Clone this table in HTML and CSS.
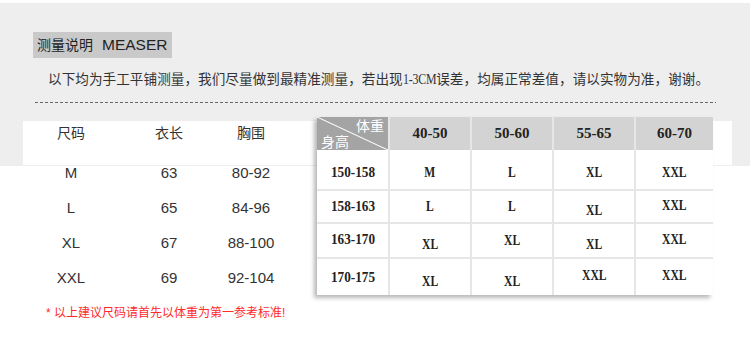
FILE: index.html
```html
<!DOCTYPE html>
<html lang="zh">
<head>
<meta charset="utf-8">
<title>测量说明</title>
<link rel="stylesheet" href="styles.css">
</head>
<body>
<section class="top">
  <h1 class="title"><span class="cn">测量说明</span>MEASER</h1>
  <p class="intro">以下均为手工平铺测量，我们尽量做到最精准测量，若出现<span class="serif">1-3CM</span>误差，均属正常差值，请以实物为准，谢谢。</p>
  <div class="rule"></div>
  <div class="panel"></div>
</section>
<section class="tables">
  <div class="left">
    <div class="size-table">
      <div class="th">尺码</div><div class="th">衣长</div><div class="th">胸围</div>
      <div class="td">M</div><div class="td">63</div><div class="td">80-92</div>
      <div class="td">L</div><div class="td">65</div><div class="td">84-96</div>
      <div class="td">XL</div><div class="td">67</div><div class="td">88-100</div>
      <div class="td">XXL</div><div class="td">69</div><div class="td">92-104</div>
    </div>
    <p class="note">* 以上建议尺码请首先以体重为第一参考标准!</p>
  </div>
  <div class="chart">
    <div class="corner">
      <svg class="diag" viewBox="0 0 71 31" preserveAspectRatio="none"><line x1="0" y1="0" x2="71" y2="31" stroke="#fff" stroke-width="1"/></svg>
      <span class="w">体重</span>
      <span class="h">身高</span>
    </div>
    <div class="hc">40-50</div><div class="hc">50-60</div><div class="hc">55-65</div><div class="hc">60-70</div>
    <div class="c r1"><span class="n">150-158</span></div><div class="c r1"><span class="s">M</span></div><div class="c r1"><span class="s">L</span></div><div class="c r1"><span class="s">XL</span></div><div class="c r1"><span class="s">XXL</span></div>
    <div class="c"><span class="n">158-163</span></div><div class="c"><span class="s">L</span></div><div class="c"><span class="s">L</span></div><div class="c low"><span class="s">XL</span></div><div class="c up"><span class="s">XXL</span></div>
    <div class="c up"><span class="n">163-170</span></div><div class="c low"><span class="s">XL</span></div><div class="c"><span class="s">XL</span></div><div class="c low"><span class="s">XL</span></div><div class="c up"><span class="s">XXL</span></div>
    <div class="c"><span class="n">170-175</span></div><div class="c low"><span class="s">XL</span></div><div class="c low"><span class="s">XL</span></div><div class="c up"><span class="s">XXL</span></div><div class="c up"><span class="s">XXL</span></div>
  </div>
</section>
</body>
</html>
```
FILE: styles.css
```css
html, body {
  margin: 0;
  padding: 0;
  background: #fff;
}
body {
  width: 750px;
  height: 341px;
  overflow: hidden;
  font-family: "Liberation Sans", "Noto Sans CJK SC", sans-serif;
  color: #333;
}
.top {
  margin-top: 3px;
  background: #eeeeee;
  padding-top: 29px;
  height: 134px;
}
.title {
  display: inline-block;
  margin: 0 0 0 33px;
  padding: 0 5px 0 4px;
  height: 26px;
  line-height: 26px;
  background: #c9c9c9;
  font-size: 15.5px;
  font-weight: normal;
  color: #222;
}
.title .cn {
  font-size: 14px;
  margin-right: 9px;
}
.intro {
  margin: 13px 0 0 48px;
  font-size: 13.6px;
  letter-spacing: 0.05px;
  line-height: 18px;
  color: #333;
  white-space: nowrap;
}
.serif {
  display: inline-block;
  font-family: "Liberation Serif", serif;
  font-size: 14px;
  letter-spacing: -0.2px;
  transform: scaleX(0.85);
  margin: 0 -3px;
}
.rule {
  margin: 13px 34px 0 35px;
  height: 1px;
  background: repeating-linear-gradient(90deg, #666 0 3px, transparent 3px 5px);
}
.panel {
  margin: 18px 18px 0 23px;
  height: 44px;
  background: #fff;
}
.tables {
  margin-top: -49px;
  display: flex;
  align-items: flex-start;
}
.left {
  margin-left: 23px;
  width: 294px;
}
.size-table {
  display: grid;
  grid-template-columns: 96px 100px 64px;
  grid-template-rows: 38px repeat(4, 35px);
  font-size: 15px;
  color: #333;
}
.th {
  font-size: 14px;
  text-align: center;
  padding-top: 7px;
  line-height: 18px;
}
.td {
  text-align: center;
  display: flex;
  align-items: center;
  justify-content: center;
}
.note {
  margin: 11px 0 0 23px;
  font-size: 12px;
  line-height: 14px;
  color: #ff2a2a;
  white-space: nowrap;
}
.chart {
  width: 396px;
  display: grid;
  grid-template-columns: 71px 80px 80px 80px 77px;
  grid-template-rows: 31px 39px 31px 33px 36px;
  gap: 2px;
  background: #e6e6e6;
  box-shadow: -3px 3px 4px rgba(0, 0, 0, 0.28);
  font-family: "Liberation Serif", serif;
  font-weight: bold;
  color: #222;
}
.corner {
  position: relative;
  background: #a4a4a4;
  margin-bottom: -2px;
  color: #fff;
  font-family: "Liberation Sans", "Noto Sans CJK SC", sans-serif;
  font-weight: normal;
  font-size: 14px;
  line-height: 14px;
}
.diag {
  position: absolute;
  left: 0;
  top: 0;
  width: 100%;
  height: 100%;
}
.corner .w {
  position: absolute;
  right: 4px;
  top: 2px;
}
.corner .h {
  position: absolute;
  left: 4px;
  bottom: 1px;
}
.hc {
  background: #d3d3d3;
  display: flex;
  align-items: center;
  justify-content: center;
  font-size: 15px;
  margin-bottom: -2px;
}
.c {
  background: #fff;
  display: flex;
  align-items: center;
  justify-content: center;
}
.c .n {
  display: inline-block;
  font-size: 15px;
  transform: scaleX(0.88);
}
.c .s {
  display: inline-block;
  font-size: 14.5px;
  transform: scaleX(0.8);
}
.r1 {
  padding-top: 5px;
}
.low {
  padding-top: 8px;
}
.up {
  padding-bottom: 3px;
}
```
